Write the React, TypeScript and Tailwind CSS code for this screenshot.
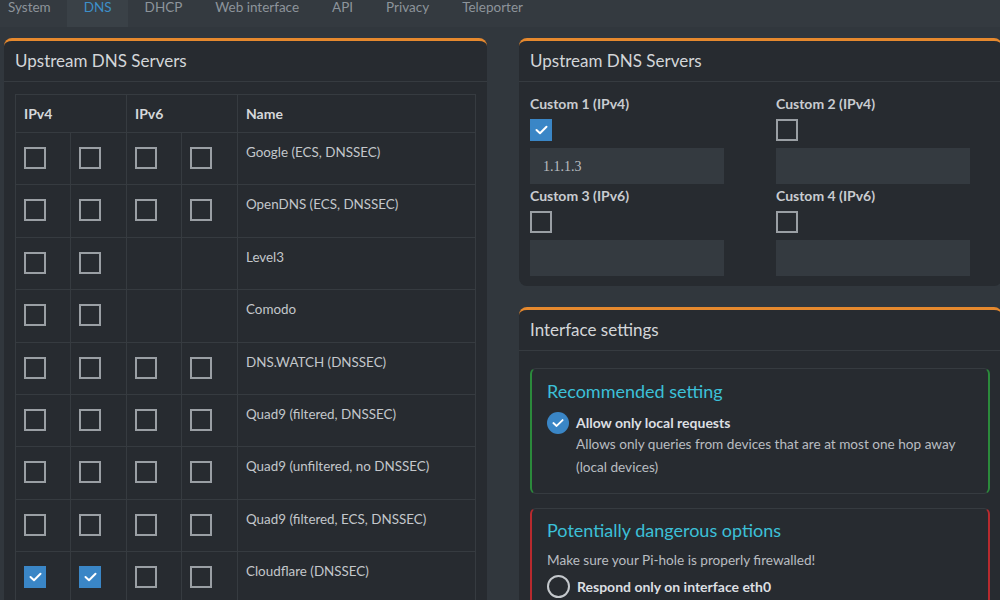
import React from 'react';

const tabs = ['System', 'DNS', 'DHCP', 'Web interface', 'API', 'Privacy', 'Teleporter'];

const servers: { name: string; v4: boolean[]; v6: boolean[] | null }[] = [
  { name: 'Google (ECS, DNSSEC)', v4: [false, false], v6: [false, false] },
  { name: 'OpenDNS (ECS, DNSSEC)', v4: [false, false], v6: [false, false] },
  { name: 'Level3', v4: [false, false], v6: null },
  { name: 'Comodo', v4: [false, false], v6: null },
  { name: 'DNS.WATCH (DNSSEC)', v4: [false, false], v6: [false, false] },
  { name: 'Quad9 (filtered, DNSSEC)', v4: [false, false], v6: [false, false] },
  { name: 'Quad9 (unfiltered, no DNSSEC)', v4: [false, false], v6: [false, false] },
  { name: 'Quad9 (filtered, ECS, DNSSEC)', v4: [false, false], v6: [false, false] },
  { name: 'Cloudflare (DNSSEC)', v4: [true, true], v6: [false, false] },
];

function Check({ on }: { on?: boolean }) {
  if (on) {
    return (
      <div className="w-[22px] h-[22px] bg-[#3a86c6] flex items-center justify-center">
        <svg width="13" height="10" viewBox="0 0 13 10" fill="none">
          <path d="M1.5 5 L5 8.2 L11.5 1.8" stroke="white" strokeWidth="2" strokeLinecap="round" strokeLinejoin="round" />
        </svg>
      </div>
    );
  }
  return <div className="w-[22px] h-[22px] border-2 border-[#9a9fa4]" />;
}

function Card({ title, children, className }: { title: string; children: React.ReactNode; className?: string }) {
  return (
    <div className={'bg-[#272b30] rounded-lg border-t-[3px] border-[#e6892e] ' + (className ?? '')}>
      <div className="h-[41px] px-[11px] flex items-center border-b border-[#363b40] text-[17px] text-[#d3d6d9]">
        {title}
      </div>
      {children}
    </div>
  );
}

function CustomField({ label, on, value }: { label: string; on?: boolean; value?: string }) {
  return (
    <div className="flex flex-col">
      <div className="text-[14px] font-bold text-[#c9ccd0] leading-[18px]">{label}</div>
      <div className="mt-[6px]">
        <Check on={on} />
      </div>
      <div className="mt-[7px] w-[194px] h-[36px] bg-[#343a40] px-[13px] flex items-center text-[14px] text-[#b9bdc1] font-['Liberation_Serif',serif]">
        {value}
      </div>
    </div>
  );
}

export default function App() {
  return (
    <div className="w-[1000px] h-[600px] overflow-hidden bg-[#31373d] font-['Lato',sans-serif]">
      <div className="h-[27px] flex bg-[#343a40] pl-[8px]">
        {tabs.map((t) => (
          <div
            key={t}
            className={
              'px-[16.5px] first:pl-0 first:pr-[16.5px] text-[13.5px] leading-[15px] ' +
              (t === 'DNS' ? 'bg-[#3a4147] text-[#3d8fc9]' : 'text-[#8d949b]')
            }
          >
            {t}
          </div>
        ))}
      </div>

      <div className="flex gap-[32px] pl-[4px] pt-[11px]">
        {/* left */}
        <Card title="Upstream DNS Servers" className="w-[483px] shrink-0 h-[600px]">
          <div className="pt-[12px] px-[11px]">
            <table className="w-[461px] border-collapse table-fixed">
              <colgroup>
                <col className="w-[55px]" />
                <col className="w-[56px]" />
                <col className="w-[55px]" />
                <col className="w-[56px]" />
                <col />
              </colgroup>
              <thead>
                <tr className="h-[38px]">
                  <th colSpan={2} className="border border-[#363b40] text-left pl-[8px] text-[14px] font-bold text-[#d5d8db]">IPv4</th>
                  <th colSpan={2} className="border border-[#363b40] text-left pl-[8px] text-[14px] font-bold text-[#d5d8db]">IPv6</th>
                  <th className="border border-[#363b40] text-left pl-[8px] text-[14px] font-bold text-[#d5d8db]">Name</th>
                </tr>
              </thead>
              <tbody>
                {servers.map((s) => (
                  <tr key={s.name} className="h-[52.4px]">
                    {s.v4.map((c, i) => (
                      <td key={'a' + i} className="border border-[#363b40] align-top pt-[14px] pl-[8px]">
                        <Check on={c} />
                      </td>
                    ))}
                    {s.v6
                      ? s.v6.map((c, i) => (
                          <td key={'b' + i} className="border border-[#363b40] align-top pt-[14px] pl-[8px]">
                            <Check on={c} />
                          </td>
                        ))
                      : [0, 1].map((i) => <td key={'b' + i} className="border border-[#363b40]" />)}
                    <td className="border border-[#363b40] align-top pt-[9px] pl-[8px] text-[13.4px] text-[#c3c7cb] leading-[20px]">
                      {s.name}
                    </td>
                  </tr>
                ))}
              </tbody>
            </table>
          </div>
        </Card>

        {/* right */}
        <div className="w-[483px] shrink-0 flex flex-col gap-[21px]">
          <Card title="Upstream DNS Servers">
            <div className="pt-[13px] pb-[10px] px-[11px] grid grid-cols-[246px_246px] gap-y-[3px]">
              <CustomField label="Custom 1 (IPv4)" on value="1.1.1.3" />
              <CustomField label="Custom 2 (IPv4)" />
              <CustomField label="Custom 3 (IPv6)" />
              <CustomField label="Custom 4 (IPv6)" />
            </div>
          </Card>

          <Card title="Interface settings" className="h-[400px]">
            <div className="pt-[17px] px-[11px] flex flex-col gap-[14px]">
              <div className="w-[460px] rounded-md border border-[#363b40] border-x-[#2b8a3b] border-x-2 px-[15px] pt-[10px] pb-[14px]">
                <div className="text-[18px] text-[#3cc0d8] leading-[24px]">Recommended setting</div>
                <div className="flex gap-[7px] mt-[9px]">
                  <div className="w-[22px] h-[22px] rounded-full bg-[#3a86c6] flex items-center justify-center shrink-0">
                    <svg width="12" height="10" viewBox="0 0 13 10" fill="none">
                      <path d="M1.5 5 L5 8.2 L11.5 1.8" stroke="white" strokeWidth="2" strokeLinecap="round" strokeLinejoin="round" />
                    </svg>
                  </div>
                  <div>
                    <div className="text-[14px] font-bold text-[#dcdfe2] leading-[21px]">Allow only local requests</div>
                    <div className="text-[13.6px] text-[#b9bdc1] leading-[23px]">
                      Allows only queries from devices that are at most one hop away (local devices)
                    </div>
                  </div>
                </div>
              </div>

              <div className="w-[460px] h-[120px] rounded-md border border-[#363b40] border-x-[#b82a2e] border-x-2 px-[15px] pt-[9px]">
                <div className="text-[18px] text-[#3cc0d8] leading-[24px]">Potentially dangerous options</div>
                <div className="text-[13.6px] text-[#b9bdc1] leading-[22px] mt-[7px]">Make sure your Pi-hole is properly firewalled!</div>
                <div className="flex gap-[7px] mt-[4px] items-center">
                  <div className="w-[23px] h-[23px] rounded-full border-2 border-[#c4c8cc] shrink-0" />
                  <div className="text-[14px] font-bold text-[#dcdfe2]">Respond only on interface eth0</div>
                </div>
              </div>
            </div>
          </Card>
        </div>
      </div>
    </div>
  );
}
